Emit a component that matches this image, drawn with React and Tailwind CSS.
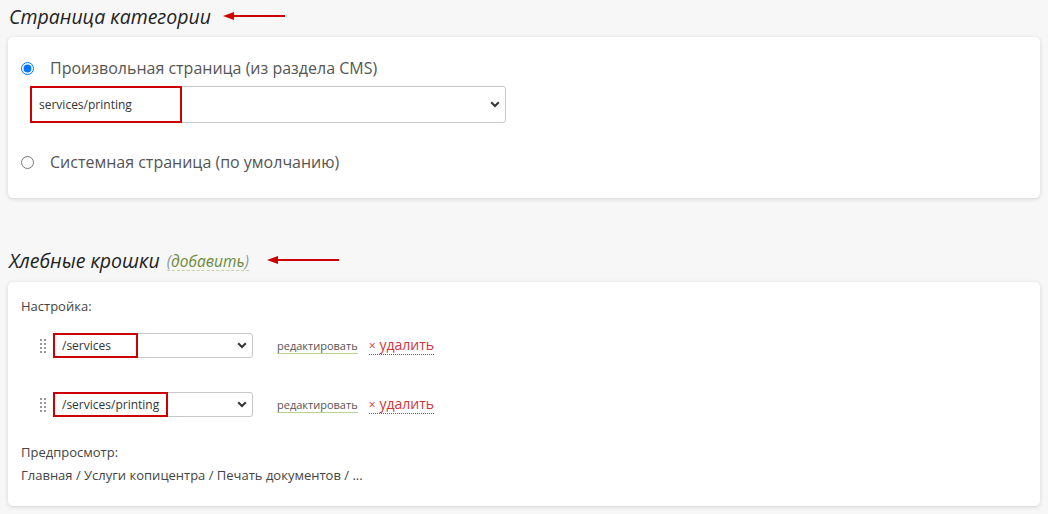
import React from "react";

const font = { fontFamily: '"Open Sans", "Noto Sans", sans-serif' };

function Chevron() {
  return (
    <svg width="10" height="7" viewBox="0 0 10 7" className="shrink-0">
      <path d="M1.2 1.3 L5 5 L8.8 1.3" fill="none" stroke="#333" strokeWidth="2" />
    </svg>
  );
}

function Arrow({ width }) {
  return (
    <svg width={width} height="10" viewBox={`0 0 ${width} 10`} className="shrink-0">
      <line x1="8" y1="5" x2={width} y2="5" stroke="#cc0000" strokeWidth="2" />
      <path d="M0 5 L11 1 L11 9 Z" fill="#cc0000" />
    </svg>
  );
}

function DragHandle() {
  return (
    <div className="grid grid-cols-2 gap-x-[2px] gap-y-[2px] w-[6px]">
      {Array.from({ length: 8 }).map((_, i) => (
        <span key={i} className="block w-[2px] h-[2px] bg-[#999]" />
      ))}
    </div>
  );
}

function FakeSelect({ value, width, height, boxWidth, textClass }) {
  return (
    <div
      className="relative flex items-center justify-between bg-white border border-[#c8c8c8] rounded-[3px] pl-[8px] pr-[5px]"
      style={{ width, height }}
    >
      <span className={textClass}>{value}</span>
      <Chevron />
      {/* red annotation box */}
      <div
        className="absolute -left-px -top-px border-2 border-[#cc0000]"
        style={{ width: boxWidth, height }}
      />
    </div>
  );
}

function Row({ value, boxWidth }) {
  return (
    <div className="flex items-center pl-[19px]">
      <DragHandle />
      <div className="ml-[7px]">
        <FakeSelect value={value} width={200} height={25} boxWidth={boxWidth} textClass="text-[12px] text-[#333]" />
      </div>
      <span className="ml-[24px] text-[11px] text-[#555] border-b border-[#b8d48c] leading-[15px]">редактировать</span>
      <span className="ml-[11px] text-[14px] text-[#d0343a] border-b border-dotted border-[#d0343a] leading-[16px]">
        <span className="text-[12px] mr-[4px]">×</span>удалить
      </span>
    </div>
  );
}

export default function App() {
  return (
    <div className="min-h-screen bg-[#f7f7f7] px-[8px] pt-[3px]" style={font}>
      {/* Страница категории */}
      <div className="flex items-center h-[28px] mb-[6px]">
        <h2 className="italic text-[19.5px] text-[#222] leading-[28px] pl-[1px]">Страница категории</h2>
        <div className="ml-[12px] mt-[-2px]">
          <Arrow width={62} />
        </div>
      </div>

      <div className="bg-white rounded-[5px] shadow-[0_1px_4px_rgba(0,0,0,0.15)] pl-[13px] pt-[19px] pb-[24px]">
        <label className="flex items-center h-[24px]">
          <input type="radio" name="page" defaultChecked className="m-0 w-[13px] h-[13px] accent-[#0075ff]" />
          <span className="ml-[16px] text-[16px] text-[#555]">Произвольная страница (из раздела CMS)</span>
        </label>
        <div className="ml-[9px] mt-[6px]">
          <FakeSelect value="services/printing" width={476} height={37} boxWidth={152} textClass="text-[12px] text-[#333]" />
        </div>
        <label className="flex items-center h-[24px] mt-[27px]">
          <input type="radio" name="page" className="m-0 w-[13px] h-[13px]" />
          <span className="ml-[16px] text-[16px] text-[#555]">Системная страница (по умолчанию)</span>
        </label>
      </div>

      {/* Хлебные крошки */}
      <div className="flex items-center h-[28px] mt-[49px] mb-[7px]">
        <h2 className="italic text-[19.5px] text-[#222] leading-[28px] pl-[1px]">Хлебные крошки</h2>
        <span className="ml-[7px] italic text-[15.5px] text-[#8a98a8] leading-[18px] border-b border-dashed border-[#c5d4a6]">
          (<span className="text-[#6b8a3a]">добавить</span>)
        </span>
        <div className="ml-[18px] mt-[-2px]">
          <Arrow width={72} />
        </div>
      </div>

      <div className="bg-white rounded-[5px] shadow-[0_1px_4px_rgba(0,0,0,0.15)] pl-[13px] pt-[15px] pb-[22px]">
        <div className="text-[13px] text-[#444] leading-[18px]">Настройка:</div>
        <div className="mt-[18px]">
          <Row value="/services" boxWidth={85} />
        </div>
        <div className="mt-[34px]">
          <Row value="/services/printing" boxWidth={115} />
        </div>
        <div className="mt-[26px] text-[13px] text-[#444] leading-[18px]">Предпросмотр:</div>
        <div className="mt-[5px] text-[13px] text-[#444] leading-[18px]">
          Главная / Услуги копицентра / Печать документов / ...
        </div>
      </div>
    </div>
  );
}
